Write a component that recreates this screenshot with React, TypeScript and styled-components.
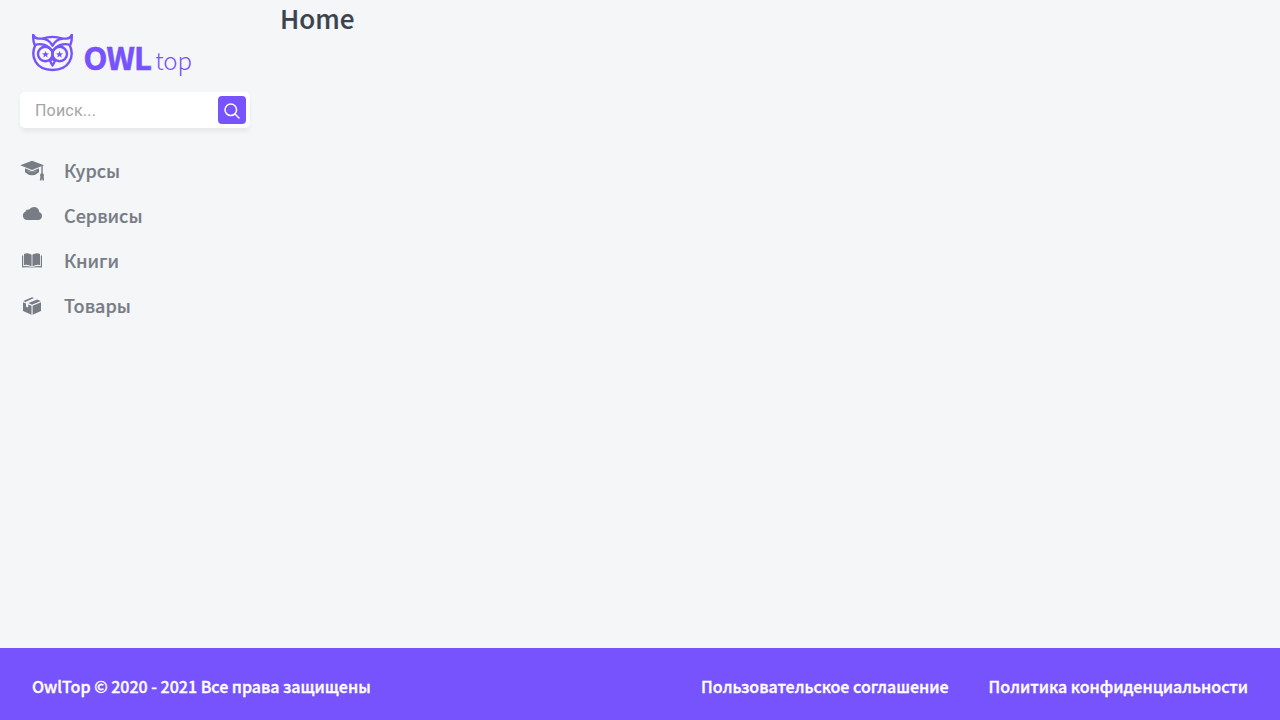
import React from "react";
import styled, { createGlobalStyle } from "styled-components";

const GlobalStyle = createGlobalStyle`
  * { box-sizing: border-box; }
  body { margin: 0; background: #f5f6f8; font-family: "Noto Sans CJK KR", "Noto Sans", sans-serif; }
`;

const Layout = styled.div`
  display: grid;
  grid-template: 1fr 72px / 250px 1fr;
  column-gap: 30px;
  min-height: 100vh;
`;

const Sidebar = styled.aside`
  padding: 28px 0 0 20px;
`;

const Logo = styled.a`
  display: flex;
  height: 64px;
  padding: 6px 0 0 12px;
  color: #7653fc;
`;

const OwlIcon = styled.svg`
  width: 41px;
  height: 38px;
  flex: none;
`;

const LogoName = styled.span`
  margin-left: 10.5px;
  font-weight: 700;
  font-size: 31px;
  line-height: 46px;
  letter-spacing: -0.8px;
  -webkit-text-stroke: 0.6px currentColor;
`;

const LogoSuffix = styled.span`
  margin-left: 4px;
  font-weight: 300;
  font-size: 24px;
  line-height: 51px;
`;

const Search = styled.form`
  display: flex;
  justify-content: space-between;
  height: 36px;
  padding: 4px 4px 4px 15px;
  border-radius: 5px;
  background: #fff;
  box-shadow: 0 4px 4px rgba(0, 0, 0, 0.05);
`;

const SearchInput = styled.input`
  width: 170px;
  height: 28px;
  padding: 1px 0 0;
  border: 0;
  outline: 0;
  background: none;
  font: 16px/27px Roboto, sans-serif;
  letter-spacing: 0.2px;
  &::placeholder { color: #a4a4a4; }
`;

const SearchButton = styled.button`
  display: flex;
  align-items: center;
  justify-content: center;
  width: 28px;
  height: 28px;
  padding: 2px 0 0;
  border: 0;
  border-radius: 4px;
  background: #7653fc;
`;

const Menu = styled.nav`
  display: flex;
  flex-direction: column;
  gap: 16px;
  margin-top: 28px;
`;

const MenuItem = styled.a`
  display: flex;
  align-items: center;
  gap: 20px;
  height: 29px;
  color: #787d85;
  font-weight: 500;
  font-size: 18px;
  line-height: 29px;
  -webkit-text-stroke: 0.2px currentColor;
`;

const MenuIcon = styled.svg`
  flex: none;
  width: 24px;
  height: 24px;
  fill: currentColor;
`;

const Title = styled.h1`
  margin: 0;
  color: #3b434e;
  font-weight: 500;
  font-size: 26px;
  line-height: 36px;
  -webkit-text-stroke: 0.2px currentColor;
`;

const Footer = styled.footer`
  grid-column: 1 / -1;
  display: flex;
  align-items: center;
  gap: 40px;
  padding: 4px 32px 0;
  background: #7653fc;
  color: #fff;
  font-weight: 500;
  font-size: 16px;
  line-height: 24px;
  -webkit-text-stroke: 0.35px currentColor;
`;

const Copyright = styled.div`
  margin-right: auto;
`;

const STAR = "M0 -3.6L1 -1.2L3.5 -1.1L1.5 .5L2.2 3L0 1.6L-2.2 3L-1.5 .5L-3.5 -1.1L-1 -1.2Z";

const menu = [
  {
    title: "Курсы",
    icon: (
      <>
        <path d="M12 1.7L24 6.2L12 11L0.2 6.2Z" />
        <path d="M5 9.3L12 12.2L19 9.3V13.2Q15.8 16.2 12 16.2Q8.2 16.2 5 13.2Z M7 11.6Q12 14.8 17 11.6L12 13.3Z" fillRule="evenodd" />
        <path d="M21.3 7.2L22.7 6.7V14.2Q24.6 15.3 23.6 17.6L24.2 21.5H22.6L22 19.5L21.4 21.5H19.8L20.4 17.600Q19.400 15.300 21.300 14.200Z" />
      </>
    ),
  },
  {
    title: "Сервисы",
    icon: <path d="M7 16.1A4.4 4.4 0 0 1 5.3 7.800Q6.200 5 9.200 5.600Q11 2.700 14.400 3Q18.900 3.600 19.200 7.900Q22 9 22 12Q21.700 15.700 18.300 16.100Z" />,
  },
  {
    title: "Книги",
    icon: (
      <>
        <path d="M4 4.9Q8.2 3.200 11.600 5.800V17.600Q8.200 15.200 4 16.100Z" />
        <path d="M20 4.9Q15.8 3.200 12.400 5.800V17.600Q15.800 15.200 20 16.100Z" />
        <path d="M2 6.500H3.200V17.200Q7.500 16.300 11 18H13Q16.500 16.300 20.800 17.200V6.500H22V18.500Q17 17.800 12 18.600Q7 17.800 2 18.500Z" />
      </>
    ),
  },
  {
    title: "Товары",
    icon: (
      <>
        <path d="M3 8.3L6 9.5V12.700L8.200 13.600V10.400L11.500 11.700V20.800L3 16.900Z" />
        <path d="M12.600 11.700L21 8.300V16.900L12.600 20.800Z" />
        <path d="M3.200 7.100L12 3.300L14.100 4.100L5.400 7.900Z" />
        <path d="M8.400 9.100L17.100 5.400L20.800 7L12 10.700Z" />
      </>
    ),
  },
];

export default function App() {
  return (
    <>
      <GlobalStyle />
      <Layout>
        <Sidebar>
          <Logo>
            <OwlIcon viewBox="0 0 41 38" fill="none" stroke="currentColor" strokeWidth="2.4" strokeLinejoin="round">
              <path d="M3 11.5C1.200 8.500 1.100 5 1.200 .8Q2.700 4.600 6.500 4.600H9.500C15 4.800 18.600 8 20.500 11.700C22.400 8 26 4.800 31.500 4.600H34.500Q38.300 4.600 39.800 .8C39.900 5 39.800 8.500 38 11.500" />
              <path d="M10.500 4.600Q20.500 1.200 30.500 4.600" />
              <path d="M3.500 10.500C-2.300 23 4 36 20.500 36S43.300 23 37.500 10.500" />
              <path d="M3.500 10.700Q11 8.900 16.500 13.200L20.500 17L24.500 13.200Q30 8.900 37.500 10.700" />
              <circle cx="13.300" cy="20" r="7.300" />
              <circle cx="27.700" cy="20" r="7.300" />
              <path d="M20.500 24L22.800 27.200L20.500 31.500L18.200 27.200Z" />
              <path d={STAR} transform="translate(13.500 20.500)" fill="currentColor" stroke="none" />
              <path d={STAR} transform="translate(27.500 20.500)" fill="currentColor" stroke="none" />
            </OwlIcon>
            <LogoName>OWL</LogoName>
            <LogoSuffix>top</LogoSuffix>
          </Logo>
          <Search>
            <SearchInput placeholder="Поиск..." />
            <SearchButton type="button" aria-label="Поиск">
              <svg width="16" height="16" viewBox="0 0 16 16" fill="none" stroke="#fff" strokeWidth="1.5" strokeLinecap="round">
                <circle cx="6.8" cy="6.8" r="5.8" />
                <path d="M11 11L15 15" />
              </svg>
            </SearchButton>
          </Search>
          <Menu>
            {menu.map(({ title, icon }) => (
              <MenuItem key={title}>
                <MenuIcon viewBox="0 0 24 24">{icon}</MenuIcon>
                {title}
              </MenuItem>
            ))}
          </Menu>
        </Sidebar>
        <main>
          <Title>Home</Title>
        </main>
        <Footer>
          <Copyright>OwlTop © 2020 - 2021 Все права защищены</Copyright>
          <a>Пользовательское соглашение</a>
          <a>Политика конфиденциальности</a>
        </Footer>
      </Layout>
    </>
  );
}
